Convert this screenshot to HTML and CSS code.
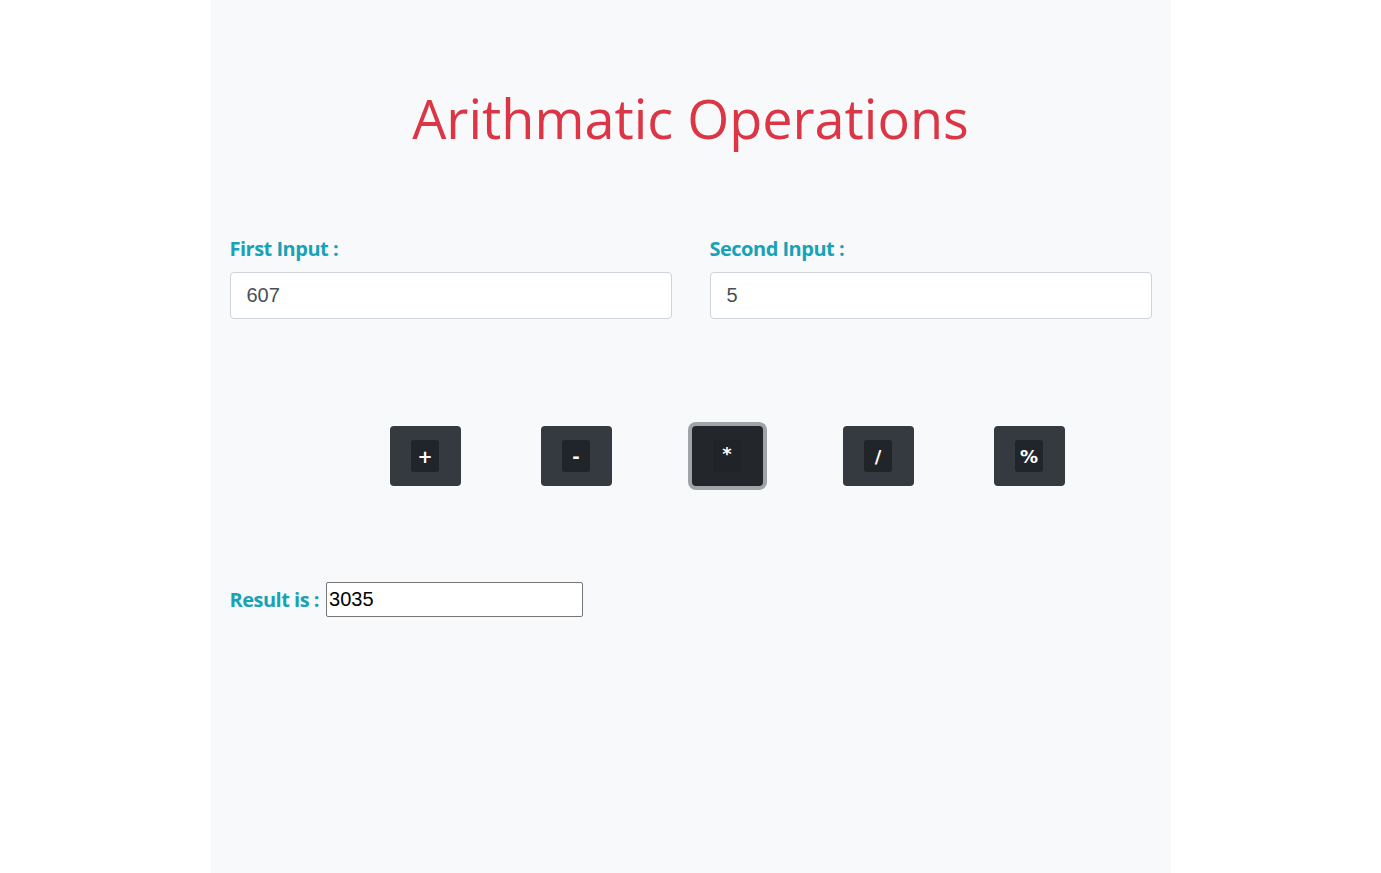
FILE: index.html
```html
<!DOCTYPE html>
<html>
<head>
<meta charset="utf-8">
<title>Arithmatic Operations</title>
<link rel="stylesheet" href="styles.css">
</head>
<body>
<div class="page">
  <h1 class="title">Arithmatic Operations</h1>
  <div class="inputs">
    <div class="field">
      <label class="label">First Input :</label>
      <input class="control" type="text" value="607">
    </div>
    <div class="field">
      <label class="label">Second Input :</label>
      <input class="control" type="text" value="5">
    </div>
  </div>
  <div class="ops">
    <button class="op"><kbd class="key">+</kbd></button>
    <button class="op"><kbd class="key">-</kbd></button>
    <button class="op active"><kbd class="key">*</kbd></button>
    <button class="op"><kbd class="key">/</kbd></button>
    <button class="op"><kbd class="key">%</kbd></button>
  </div>
  <div class="result">
    <label class="label">Result is :</label>
    <input class="result-box" type="text" value="3035">
  </div>
</div>
</body>
</html>
```
FILE: styles.css
```css
html, body {
  margin: 0;
  padding: 0;
  background: #ffffff;
}
.page {
  width: 960px;
  min-height: 873px;
  margin: 0 auto;
  background: #f8f9fa;
  box-sizing: border-box;
  padding: 86px 19px 0 19px;
  font-family: "Open Sans", "Noto Sans", sans-serif;
}
.title {
  margin: 0;
  text-align: center;
  color: #dc3545;
  font-family: "Open Sans", sans-serif;
  font-weight: 400;
  font-size: 54px;
  line-height: 64px;
}
.inputs {
  display: flex;
  gap: 38px;
  margin-top: 85px;
}
.field {
  flex: 1;
  display: flex;
  flex-direction: column;
}
.label {
  color: #17a2b8;
  font-family: "Open Sans", sans-serif;
  font-weight: 700;
  font-size: 20px;
  line-height: 28px;
  letter-spacing: -0.5px;
}
.control {
  margin-top: 9px;
  height: 47px;
  box-sizing: border-box;
  border: 1px solid #ced4da;
  border-radius: 4px;
  background: #fff;
  padding: 0 16px;
  font-family: "Liberation Sans", Arial, sans-serif;
  font-size: 20px;
  color: #495057;
}
.ops {
  display: flex;
  gap: 80px;
  padding-left: 160px;
  margin-top: 107px;
}
.op {
  width: 71px;
  height: 60px;
  border: none;
  border-radius: 4px;
  background: #343a40;
  display: flex;
  align-items: center;
  justify-content: center;
  padding: 0;
  cursor: pointer;
}
.op.active {
  background: #23272b;
  box-shadow: 0 0 0 4px #a0a3a7;
}
.key {
  display: flex;
  align-items: center;
  justify-content: center;
  width: 28px;
  height: 32px;
  border-radius: 3px;
  background: #212529;
  color: #fff;
  font-family: "DejaVu Sans", sans-serif;
  font-weight: 700;
  font-size: 18px;
}
.op.active .key {
  align-items: flex-start;
  padding-top: 3px;
  box-sizing: border-box;
  background: #202327;
}
.result {
  display: flex;
  align-items: center;
  margin-top: 96px;
  gap: 7px;
}
.result-box {
  width: 257px;
  height: 35px;
  box-sizing: border-box;
  border: 1px solid #767676;
  border-radius: 2px;
  padding: 0 2px;
  font-family: "Liberation Sans", Arial, sans-serif;
  font-size: 20px;
  color: #000;
  background: #fff;
}
```
